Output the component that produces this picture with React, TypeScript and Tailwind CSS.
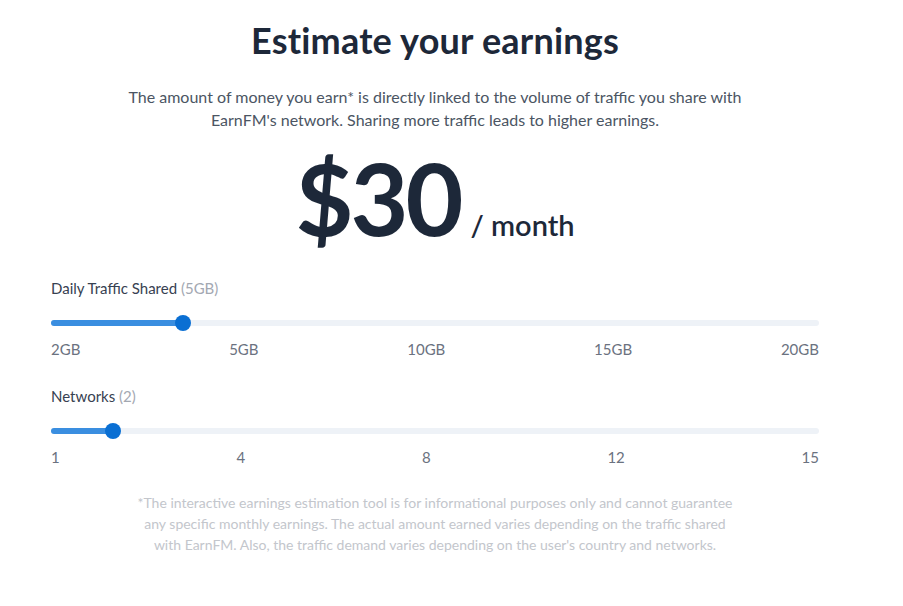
const font = { fontFamily: "Lato, 'Open Sans', sans-serif" }

type Slider = {
  label: string
  value: string
  fill: number
  ticks: string[]
}

const sliders: Slider[] = [
  { label: "Daily Traffic Shared", value: "(5GB)", fill: 132, ticks: ["2GB", "5GB", "10GB", "15GB", "20GB"] },
  { label: "Networks", value: "(2)", fill: 62, ticks: ["1", "4", "8", "12", "15"] },
]

const Range = ({ s }: { s: Slider }) => (
  <div className="flex flex-col">
    <div className="text-[15px] leading-5 text-[#374151]">
      {s.label} <span className="text-[#a3a8b2]">{s.value}</span>
    </div>
    <div className="relative mt-[22px] h-[6px] w-full rounded-full bg-[#eef2f7]">
      <div className="h-full rounded-full bg-[#3a8ee0]" style={{ width: s.fill }} />
      <div
        className="absolute top-1/2 h-4 w-4 -translate-x-1/2 -translate-y-1/2 rounded-full bg-[#0a6fd3]"
        style={{ left: s.fill }}
      />
    </div>
    <div className="mt-[13px] flex justify-between text-[15px] leading-5 text-[#6b7280]">
      {s.ticks.map((t) => (
        <span key={t}>{t}</span>
      ))}
    </div>
  </div>
)

export default function App() {
  return (
    <div className="min-h-screen bg-white" style={font}>
      <div className="ml-[51px] flex w-[768px] flex-col pt-[18px]">
        <h1 className="text-center text-[36px] font-bold leading-[44px] tracking-[0.2px] text-[#1d2839]">
          Estimate your earnings
        </h1>
        <p className="mx-auto mt-[23px] w-[640px] text-center text-[16px] leading-[23px] text-[#4b5563]">
          The amount of money you earn* is directly linked to the volume of traffic you share with
          <br />
          EarnFM's network. Sharing more traffic leads to higher earnings.
        </p>
        <div className="mt-[14px] flex items-baseline justify-center gap-[10px] text-[#1d2839]">
          <span className="text-[100px] font-bold leading-[104px] tracking-[-3px]">$30</span>
          <span className="text-[29px] font-semibold">/ month</span>
        </div>
        <div className="mt-[29px] flex flex-col gap-[27px]">
          {sliders.map((s) => (
            <Range key={s.label} s={s} />
          ))}
        </div>
        <p className="mx-auto mt-[25px] w-[640px] text-center text-[14px] leading-[21px] text-[#c3c6cc]">
          *The interactive earnings estimation tool is for informational purposes only and cannot guarantee
          <br />
          any specific monthly earnings. The actual amount earned varies depending on the traffic shared
          <br />
          with EarnFM. Also, the traffic demand varies depending on the user's country and networks.
        </p>
      </div>
    </div>
  )
}
